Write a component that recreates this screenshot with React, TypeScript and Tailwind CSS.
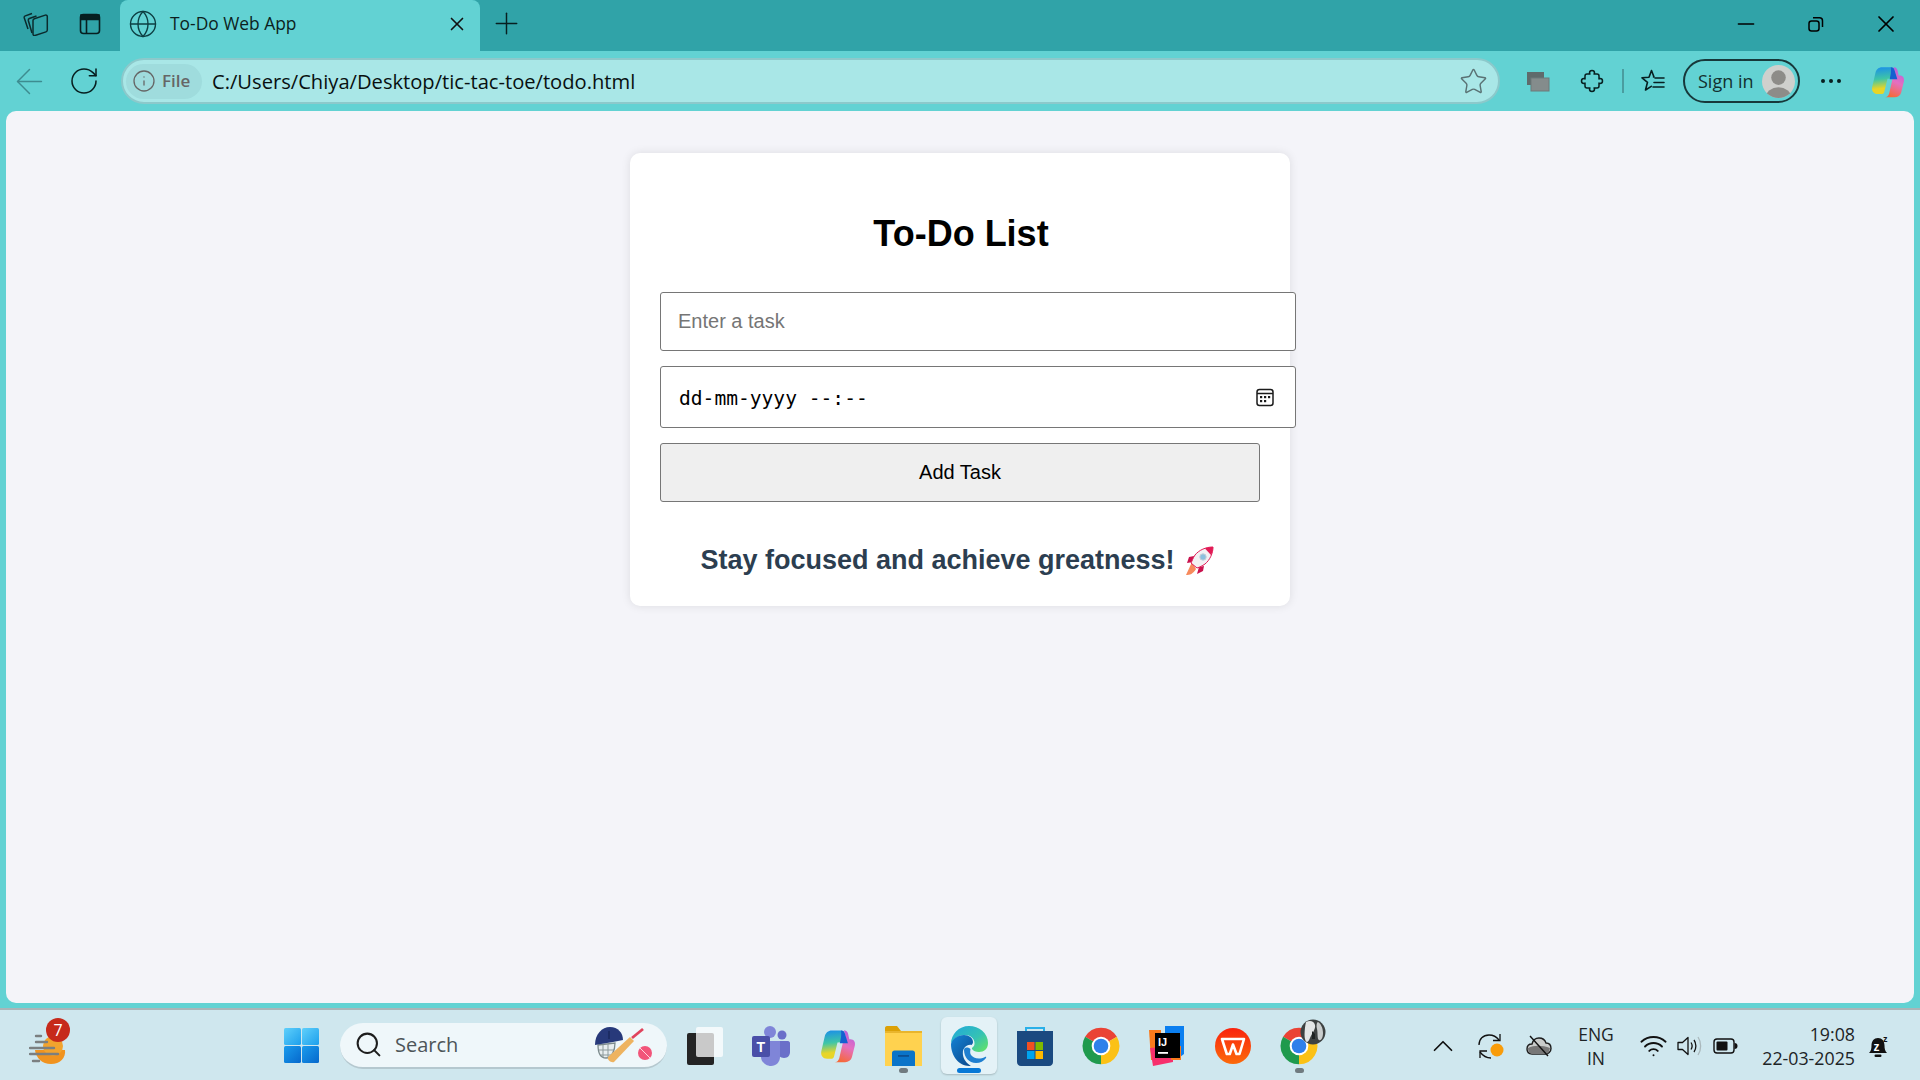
import { ArrowLeft, RotateCw, Globe, X, Plus, Minus, Info, Star, ChevronUp, Wifi, Search } from "lucide-react";

const ui = "font-['Open_Sans',sans-serif]";

function Collections() {
  return (
    <svg width="26" height="25" viewBox="0 0 26 25" fill="none" stroke="#0b2b2d" strokeWidth="1.500" strokeLinejoin="round">
      <path d="M5 18 1.300 7c-.3-1 .2-1.800 1-2.100L9 2.500" />
      <path d="M9 22 5.300 9.500c-.2-1 .2-1.700 1-2L13.500 5" />
      <path d="M10 9.500c0-.9.5-1.500 1.300-1.800l11-3.600c1.100-.3 2 .4 2 1.500v13.500c0 .9-.4 1.500-1.300 1.800l-11 3.600c-1.100.4-2-.3-2-1.400z" />
    </svg>
  );
}

function VerticalTabs() {
  return (
    <svg width="24" height="24" viewBox="0 0 24 24" fill="none" stroke="#071f20" strokeWidth="1.600">
      <rect x="2.500" y="2.500" width="19" height="19" rx="3" />
      <path d="M3 3h18v4.500H3z" fill="#071f20" />
      <path d="M8.500 7.500v14" />
    </svg>
  );
}

function Restore() {
  return (
    <svg width="18" height="18" viewBox="0 0 18 18" fill="none" stroke="#000" strokeWidth="1.500">
      <rect x="2" y="6" width="10" height="10" rx="2.500" />
      <path d="M6 2.800h6.500c1.700 0 3 1.300 3 3V12" />
    </svg>
  );
}

function Workspaces() {
  return (
    <svg width="24" height="22" viewBox="0 0 24 22">
      <rect x="1" y="2" width="17" height="13" fill="#5f6b6c" />
      <rect x="5" y="8" width="18" height="13" fill="#848c8c" stroke="#6d7a7a" />
    </svg>
  );
}

function Extensions() {
  return (
    <svg width="24" height="24" viewBox="0 0 24 24" fill="none" stroke="#071f20" strokeWidth="1.500" strokeLinejoin="round">
      <path d="M7 5h3c0 0-.5-.5-.5-1a2.500 2.500 0 0 1 5 0c0 .5-.5 1-.5 1h3a2 2 0 0 1 2 2v3c0 0 .5-.5 1-.5a2.500 2.500 0 0 1 0 5c-.5 0-1-.5-1-.5v3a2 2 0 0 1-2 2h-3c0 0 .5.5.5 1a2.500 2.500 0 0 1-5 0c0-.5.5-1 .5-1H7a2 2 0 0 1-2-2v-3c0 0-.5.5-1 .5a2.500 2.500 0 0 1 0-5c.5 0 1 .5 1 .5V7a2 2 0 0 1 2-2z" />
    </svg>
  );
}

function Favorites() {
  return (
    <svg width="26" height="26" viewBox="0 0 26 26" fill="none" stroke="#071f20" strokeWidth="1.600" strokeLinejoin="round" strokeLinecap="round">
      <path d="M11.500 2.500 14 9h-.5M11.500 2.500 9 9.300l-7 .5 5.500 4.500L5.500 22l5.800-3.700" />
      <path d="M15 10h9M14 14.500h10M13 19h11" />
    </svg>
  );
}

function Avatar({ size }: { size: number }) {
  return (
    <svg width={size} height={size} viewBox="0 0 34 34">
      <clipPath id="avatarClip"><circle cx="17" cy="17" r="17" /></clipPath>
      <g clipPath="url(#avatarClip)">
        <rect width="34" height="34" fill="#cfd0cd" />
        <circle cx="17" cy="13" r="7.500" fill="#8d8c88" />
        <ellipse cx="17" cy="33" rx="13" ry="10" fill="#8d8c88" />
      </g>
    </svg>
  );
}

function Copilot({ id, size }: { id: string; size: number }) {
  return (
    <svg width={size} height={size} viewBox="0 0 32 32">
      <defs>
        <linearGradient id={`${id}a`} x1="0.2" y1="0" x2="0.3" y2="1">
          <stop offset="0" stopColor="#1b8fe8" />
          <stop offset="0.45" stopColor="#3fc6a6" />
          <stop offset="0.8" stopColor="#e8d527" />
        </linearGradient>
        <linearGradient id={`${id}b`} x1="0.7" y1="0" x2="0.4" y2="1">
          <stop offset="0" stopColor="#b35fe0" />
          <stop offset="0.5" stopColor="#e56fc0" />
          <stop offset="1" stopColor="#f6693a" />
        </linearGradient>
      </defs>
      <path d="M11 3h8c1.500 0 2.700 1 3 2.400L24 13l-8 .5-3 12c-.3 1.200-1.300 2-2.500 2H7c-3.500 0-5.800-3-5-6.500l3-13C5.700 5 8 3 11 3z" fill={`url(#${id}a)`} />
      <path d="M22 3c1.800 0 2.800 1.200 3.200 3l1 4.500h1c3 0 4.500 2.500 3.800 5.500l-2.500 10c-.7 2.800-3 4.500-6 4.500h-9c2 0 3.500-1.500 4-3.500l3-13c.5-2.500 1.500-3 3-3l-2-8.500z" fill={`url(#${id}b)`} />
      <path d="M19 3c2 0 3 1 3.500 3L25 14h-7l1-5c.3-2 .3-4.500 0-6z" fill="#1560d0" />
    </svg>
  );
}

function Weather() {
  return (
    <svg width="38" height="34" viewBox="0 0 38 34">
      <path d="M6 20h30c1 8-5 14-14 14S7 28 6 20z" fill="#f0931f" />
      <circle cx="24" cy="16" r="10" fill="#f2a32e" />
      <g stroke="#7b7f80" strokeWidth="2.400" strokeLinecap="round">
        <path d="M7 6h5M7 12h11M1 18h24M1 24h28M4 31h6" />
      </g>
    </svg>
  );
}

function WinLogo() {
  return (
    <svg width="35" height="35" viewBox="0 0 35 35">
      <defs>
        <linearGradient id="w1" x1="0" y1="0" x2="1" y2="1"><stop offset="0" stopColor="#5fd0fb" /><stop offset="1" stopColor="#1d9fec" /></linearGradient>
        <linearGradient id="w2" x1="0" y1="0" x2="1" y2="1"><stop offset="0" stopColor="#1a9ced" /><stop offset="1" stopColor="#0668cc" /></linearGradient>
      </defs>
      <rect width="17" height="17" fill="url(#w1)" rx="1.500" />
      <rect x="18" width="17" height="17" fill="url(#w1)" rx="1.500" />
      <rect y="18" width="17" height="17" fill="url(#w2)" rx="1.500" />
      <rect x="18" y="18" width="17" height="17" fill="url(#w2)" rx="1.500" />
    </svg>
  );
}

function Cricket() {
  return (
    <svg width="58" height="37" viewBox="0 0 58 37">
      <path d="M3 19 20 17c0 7-3 15-9 15S3 26 3 19z" fill="#e8eef0" stroke="#7c8a8c" strokeWidth="1.300" />
      <path d="M4 24h15M6 29h11M8 19v12M13 18v14" stroke="#8d9a9b" strokeWidth="1" />
      <path d="M0 19C0 8 7 1 15 1s13 6 13 13L18 16z" fill="#27397a" />
      <path d="M14 5v8" stroke="#12204f" strokeWidth="1" />
      <path d="M13 31 35 11l4 4-20 21c-3 1-7-2-6-5z" fill="#eeb360" />
      <path d="M37 12 48 3" stroke="#e0435c" strokeWidth="2.800" />
      <circle cx="50" cy="27" r="7" fill="#f2557a" />
      <path d="M45 22l10 10" stroke="#ffd5de" strokeWidth="1" />
    </svg>
  );
}

function Explorerapp() {
  return (
    <svg width="37" height="40" viewBox="0 0 37 40">
      <path d="M0 2c0-1 .6-2 2-2h10l4 5H0z" fill="#dca106" />
      <path d="M0 5h37v35H0z" fill="#ffd24f" />
      <path d="M0 5h37v2H0z" fill="#e9b52c" />
      <path d="M7 27c0-1.500 1-2.500 2.500-2.500h18c1.500 0 2.500 1 2.500 2.500v13H7z" fill="#0a74c9" />
      <path d="M13 29h11v1.800H13z" fill="#0b4f92" />
    </svg>
  );
}

function Edge() {
  return (
    <svg width="37" height="40" viewBox="0 0 37 40">
      <defs>
        <linearGradient id="e1" x1="0" y1="0" x2="1" y2="0.9"><stop offset="0" stopColor="#1fa8dc" /><stop offset="0.6" stopColor="#35c2b4" /><stop offset="1" stopColor="#62e268" /></linearGradient>
        <linearGradient id="e2" x1="0" y1="0" x2="0.8" y2="1"><stop offset="0" stopColor="#1583d6" /><stop offset="1" stopColor="#0b4b90" /></linearGradient>
      </defs>
      <path d="M18 0c10 0 19 7 19 17 0 6-4 9-9 9-3 0-6-1-7-3-.4-1 .4-1.500 1-2 1-1 1.500-2 1.500-3.500C23.500 12 19 9 14 9 7 9 1 14 0 18 0 8 8 0 18 0z" fill="url(#e1)" />
      <path d="M0 18c1-5 7-9 13-9 5 0 9 3 9 7 0 1-.4 2-1.500 3C15 18 11 23 12 29c.5 4 3 8 8 10.800C9 41 0 31 0 18z" fill="url(#e2)" />
      <path d="M13 24c0 7 5 13 12 13 4 0 8-2 10-5 .5-1 0-1.500-1-1-6 3-12 1-14-2-1-2-1-3-.5-6-3-2-6-2-6.500 1z" fill="#1f7fd0" />
    </svg>
  );
}

function Store() {
  return (
    <svg width="36" height="40" viewBox="0 0 36 40">
      <path d="M9 7V2h18v5" fill="none" stroke="#29b0e8" strokeWidth="2" />
      <path d="M0 5h36v31c0 2-1.500 4-4 4H4c-2.500 0-4-2-4-4z" fill="#1a4a80" />
      <rect x="10" y="16" width="7.500" height="8" fill="#f25022" />
      <rect x="18.500" y="16" width="7.500" height="8" fill="#7fba00" />
      <rect x="10" y="25" width="7.500" height="8" fill="#00a4ef" />
      <rect x="18.500" y="25" width="7.500" height="8" fill="#ffb900" />
    </svg>
  );
}

function Chrome({ size }: { size: number }) {
  return (
    <svg width={size} height={size} viewBox="0 0 24 24">
      <path d="M12 12 2.470 6.500A11 11 0 0 1 21.530 6.500Z" fill="#ea4335" />
      <path d="M12 12 21.530 6.500A11 11 0 0 1 12 23Z" fill="#fbc116" />
      <path d="M12 12 12 23A11 11 0 0 1 2.470 6.500Z" fill="#1f9a4d" />
      <circle cx="12" cy="12" r="5.600" fill="#fff" />
      <circle cx="12" cy="12" r="4.400" fill="#2f80ea" />
    </svg>
  );
}

function Idea() {
  return (
    <svg width="36" height="40" viewBox="0 0 36 40">
      <path d="M0 4h12v30H2z" fill="#f97a1c" />
      <path d="M16 0h19v28l-8 6H16z" fill="#0b7ff0" />
      <path d="M1 22 24 20v16l-20 4z" fill="#f7306d" />
      <path d="M22 20h10v14H22z" fill="#f97a1c" />
      <rect x="6" y="7" width="25" height="25" fill="#000" />
      <rect x="9" y="26" width="10" height="1.800" fill="#fff" />
      <text x="9" y="20" fill="#fff" fontFamily="'Liberation Sans',sans-serif" fontSize="11" fontWeight="700">IJ</text>
    </svg>
  );
}

function Wps() {
  return (
    <svg width="36" height="38" viewBox="0 0 36 38">
      <defs>
        <linearGradient id="wp" x1="0" y1="0" x2="0" y2="1"><stop offset="0" stopColor="#f9230e" /><stop offset="1" stopColor="#fc6a0a" /></linearGradient>
      </defs>
      <circle cx="18" cy="19" r="18" fill="url(#wp)" />
      <path d="M7 12h22l-4.500 15h-3L18 17.500 14.800 27h-3z" fill="none" stroke="#fff" strokeWidth="2.600" strokeLinejoin="round" />
    </svg>
  );
}

function Rocket() {
  return (
    <svg width="29" height="29" viewBox="0 0 29 29" className="shrink-0">
      <path d="M7 16 1 29c4 0 7-1 10-6z" fill="#f78a5c" />
      <path d="M9 10 4 11l-2 6 6-1zM19 20l-1 5-6 3 2-7z" fill="#c9124e" />
      <path d="M28 1c-7 0-14 3-18 8-2 3-3 6-4 8l6 5c3-1 5-2 8-4 5-4 8-11 8-17z" fill="#f3f1f4" stroke="#e21a55" strokeWidth="1" />
      <path d="M28 1c-3 0-6 .5-8 1.500L26 9c1.500-2.500 2-5.500 2-8z" fill="#e21a55" />
      <circle cx="18" cy="11" r="3.200" fill="#8cc0df" stroke="#c6d0d8" />
    </svg>
  );
}

function Calendar() {
  return (
    <svg width="18" height="19" viewBox="0 0 18 19" fill="none" stroke="#1b1b1b" strokeWidth="1.500">
      <rect x="1" y="1.500" width="16" height="16" rx="2.500" />
      <path d="M1 5.500h16" />
      <g fill="#1b1b1b" stroke="none">
        <rect x="4" y="8" width="2.200" height="2.200" />
        <rect x="8" y="8" width="2.200" height="2.200" />
        <rect x="12" y="8" width="2.200" height="2.200" />
        <rect x="4" y="12" width="2.200" height="2.200" />
        <rect x="8" y="12" width="2.200" height="2.200" />
      </g>
    </svg>
  );
}

function Sync() {
  return (
    <svg width="28" height="28" viewBox="0 0 28 28">
      <g fill="none" stroke="#111" strokeWidth="1.300">
        <path d="M2 13C2 7 6 3 12 3c4 0 7 1 10 5" />
        <path d="M23 2v6.500h-7" />
        <path d="M3 20c3 4 6 6 11 6" />
        <path d="M3 26v-7h7" />
      </g>
      <circle cx="20" cy="18" r="6.500" fill="#f99c0a" />
    </svg>
  );
}

function CloudOff() {
  return (
    <svg width="26" height="22" viewBox="0 0 26 22">
      <path d="M6 19C2 19 1 16 1 14c0-3 2-5 5-5 1-4 4-6 7-6 4 0 6 2 7 5 3 0 5 2 5 5.500S22 19 20 19z" fill="#c9cccb" stroke="#1d1d1d" strokeWidth="1.400" />
      <path d="M2 13c6-3 14-3 22 0-1 4-2 6-5 6H7c-3 0-5-2-5-6z" fill="#777" />
      <path d="M4 1 22 21" stroke="#111" strokeWidth="1.400" />
    </svg>
  );
}

function Speaker() {
  return (
    <svg width="26" height="24" viewBox="0 0 26 24" fill="none" stroke="#111" strokeWidth="1.300">
      <path d="M1 8.500h4.500L11 3.500v17l-5.500-5H1z" strokeLinejoin="round" />
      <path d="M14 8.500c1.300 2 1.300 5 0 7M17 6c2.500 3.500 2.500 8.500 0 12" />
      <path d="M21 3c3.500 5 3.500 13 0 18" stroke="#aab8bc" />
    </svg>
  );
}

function Battery() {
  return (
    <svg width="25" height="18" viewBox="0 0 25 18">
      <rect x="1" y="2" width="20" height="14" rx="3" fill="none" stroke="#111" strokeWidth="1.400" />
      <rect x="3.500" y="4.500" width="11" height="9" rx="1" fill="#111" />
      <path d="M21.500 6c2 0 3 1 3 3s-1 3-3 3z" fill="#111" />
    </svg>
  );
}

function Bell() {
  return (
    <svg width="22" height="24" viewBox="0 0 22 24">
      <path d="M1 19c2-2 2.500-4 2.500-7.500C3.500 7 6 4 10 4c4 0 6.500 3 6.500 7.500 0 3.500.5 5.500 2.500 7.500z" fill="#111" />
      <rect x="6.500" y="20.500" width="7" height="2.500" rx="1.200" fill="#111" />
      <text x="5.500" y="16.500" fill="#fff" fontFamily="'Liberation Sans',sans-serif" fontSize="12" fontWeight="700">z</text>
      <text x="15" y="8" fill="#111" fontFamily="'Liberation Sans',sans-serif" fontSize="9" fontWeight="700">z</text>
    </svg>
  );
}

function Slot({ children, dot, active }: { children: React.ReactNode; dot?: "gray" | "blue"; active?: boolean }) {
  return (
    <div className={`relative w-[56px] h-[57px] mr-[10px] flex items-center justify-center rounded-md ${active ? "bg-[#e4f2f7] shadow-[0_1px_2px_rgba(0,0,0,0.2)]" : ""}`}>
      {children}
      {dot === "gray" && <span className="absolute bottom-[1px] left-[24px] w-[9px] h-[5px] rounded-full bg-[#707b80]" />}
      {dot === "blue" && <span className="absolute bottom-[1px] left-[16px] w-[24px] h-[5px] rounded-full bg-[#0778d6]" />}
    </div>
  );
}

export default function App() {
  return (
    <div className={`w-[1920px] h-[1080px] flex flex-col overflow-hidden bg-[#62d2d3] ${ui}`}>
      {/* Title bar */}
      <div className="h-[51px] shrink-0 flex items-center bg-[#30a3a8] text-[#0c1f20]">
        <div className="w-[79px] pl-[23px] pb-[4px] flex items-center"><Collections /></div>
        <div className="w-[41px] pb-[4px] flex items-center -ml-[1px] mr-[1px]"><VerticalTabs /></div>
        <div className="w-[360px] h-[51px] flex items-center bg-[#62d2d3] rounded-t-lg pl-[8px] pr-[12px] pb-[4px]">
          <Globe size={30} strokeWidth={1.1} color="#0d3f43" />
          <span className="ml-[12px] text-[17.4px] whitespace-nowrap">To-Do Web App</span>
          <X size={22} strokeWidth={1.8} className="ml-auto" color="#111" />
        </div>
        <div className="pb-[4px] ml-[9px]"><Plus size={35} strokeWidth={1} color="#071f20" /></div>
        <div className="ml-auto flex items-center pb-[4px] -mr-[1px]">
          <div className="w-[70px] flex justify-center"><Minus size={26} strokeWidth={1.5} color="#000" /></div>
          <div className="w-[70px] flex justify-center"><Restore /></div>
          <div className="w-[70px] flex justify-center"><X size={28} strokeWidth={1.5} color="#000" /></div>
        </div>
      </div>

      {/* Toolbar */}
      <div className="h-[60px] shrink-0 flex items-center">
        <ArrowLeft size={41} strokeWidth={0.85} color="#3d8c90" className="ml-[9px]" />
        <RotateCw size={32} strokeWidth={1.15} color="#071f20" className="ml-[18px]" />
        <div className="ml-[21px] w-[1379px] h-[46px] flex items-center bg-[#a9e7e7] border-2 border-[#8cc9cb] rounded-full pl-[3px]">
          <div className="w-[76px] h-[35px] flex items-center rounded-full bg-[#9fdcdd] pl-[6px] text-[#666]">
            <Info size={24} strokeWidth={1.3} color="#666" />
            <span className="ml-[6px] text-[17px] font-semibold">File</span>
          </div>
          <span className="ml-[10px] text-[20.15px] text-[#081010] whitespace-nowrap">C:/Users/Chiya/Desktop/tic-tac-toe/todo.html</span>
          <Star size={29} strokeWidth={1.2} color="#5a7274" className="ml-auto mr-[10px]" />
        </div>
        <div className="ml-[26px]"><Workspaces /></div>
        <div className="ml-[30px]"><Extensions /></div>
        <div className="ml-[18px] w-[2px] h-[24px] bg-[#4a9da0]" />
        <div className="ml-[16px]"><Favorites /></div>
        <div className="ml-[17px] w-[117px] h-[44px] flex items-center rounded-full border-2 border-[#17383a] pl-[13px] pr-[3px] justify-between">
          <span className="text-[18px] text-[#12302f] whitespace-nowrap">Sign in</span>
          <Avatar size={33} />
        </div>
        <div className="ml-[21px] flex gap-[4px]">
          <span className="w-[4px] h-[4px] rounded-full bg-[#071f20]" />
          <span className="w-[4px] h-[4px] rounded-full bg-[#071f20]" />
          <span className="w-[4px] h-[4px] rounded-full bg-[#071f20]" />
        </div>
        <div className="ml-[29px]"><Copilot id="cp1" size={35} /></div>
      </div>

      {/* Page */}
      <div className="flex-1 min-h-0 px-[6px] pb-[5px]">
        <div className="h-full bg-[#f4f4f9] rounded-[10px] pt-[42px] font-['Liberation_Sans',sans-serif]">
          <div className="ml-[624px] w-[660px] h-[453px] bg-white rounded-[10px] shadow-[0_0_10px_rgba(0,0,0,0.1)] px-[30px] pt-[60px]">
            <h1 className="h-[41px] leading-[41px] text-[36px] font-bold text-black text-center pl-[2px]">To-Do List</h1>
            <input
              placeholder="Enter a task"
              readOnly
              className="block mt-[38px] w-[636px] h-[59px] px-[17px] text-[20px] bg-white border border-[#767676] rounded-[3px] placeholder:text-[#757575] outline-none"
            />
            <div className="mt-[15px] w-[636px] h-[62px] flex items-center justify-between bg-white border border-[#767676] rounded-[3px] pl-[18px] pr-[21px]">
              <span className="pt-[3px] font-['DejaVu_Sans_Mono',monospace] text-[19.6px] text-black whitespace-pre">dd-mm-yyyy --:--</span>
              <Calendar />
            </div>
            <button className="block mt-[15px] w-[600px] h-[59px] pb-[2px] text-[20px] text-black bg-[#efefef] border border-[#767676] rounded-[3px]">Add Task</button>
            <p className="mt-[42px] h-[32px] flex items-center justify-center gap-[10px] text-[27px] font-bold text-[#2c3e50] whitespace-nowrap pr-[6px]">
              <span>Stay focused and achieve greatness!</span>
              <Rocket />
            </p>
          </div>
        </div>
      </div>

      {/* Taskbar */}
      <div className="h-[72px] shrink-0 flex items-center bg-[#cfe7ee] border-t-2 border-[#a9b5b8] pt-[1px] text-[#1a1a1a]">
        <div className="relative ml-[29px] w-[38px] h-[34px] mt-[3px]">
          <Weather />
          <span className="absolute -top-[12px] left-[17px] w-[24px] h-[24px] rounded-full bg-[#c62a1b] text-white text-[16px] flex items-center justify-center">7</span>
        </div>
        <div className="ml-[217px]"><WinLogo /></div>
        <div className="ml-[21px] w-[327px] h-[46px] flex items-center rounded-full bg-[#eff7fa] border-b-2 border-[#b5c8cf] pl-[14px] pr-[14px]">
          <Search size={29} strokeWidth={1.7} color="#1d1d1d" />
          <span className="ml-[12px] text-[20px] text-[#4d5558]">Search</span>
          <div className="ml-auto"><Cricket /></div>
        </div>
        <div className="ml-[10px] flex items-center">
          <Slot>
            <div className="relative w-[36px] h-[38px]">
              <div className="absolute left-0 bottom-0 w-[27px] h-[32px] bg-[#242424] rounded-[2px]" />
              <div className="absolute right-0 top-0 w-[27px] h-[30px] bg-[#ffffffc0] rounded-[2px]" />
            </div>
          </Slot>
          <Slot>
            <svg width="38" height="40" viewBox="0 0 38 40">
              <circle cx="30" cy="9" r="4.500" fill="#6a6fc9" />
              <circle cx="18" cy="6" r="6" fill="#7f85d8" />
              <path d="M26 15h10c1 0 2 1 2 2v9c0 3-2 6-6 6s-6-3-6-6z" fill="#6a6fc9" />
              <path d="M9 15h19v16c0 5-4 9-9 9s-10-4-10-9z" fill="#7f85d8" />
              <rect y="10" width="18" height="21" rx="2" fill="#4a4fa8" />
              <text x="4.500" y="26" fill="#fff" fontFamily="'Liberation Sans',sans-serif" fontSize="14" fontWeight="700">T</text>
            </svg>
          </Slot>
          <Slot><Copilot id="cp2" size={37} /></Slot>
          <Slot dot="gray"><Explorerapp /></Slot>
          <Slot dot="blue" active><Edge /></Slot>
          <Slot><Store /></Slot>
          <Slot><Chrome size={40} /></Slot>
          <Slot><Idea /></Slot>
          <Slot><Wps /></Slot>
          <Slot dot="gray">
            <div className="relative"><Chrome size={40} />
              <svg width="26" height="26" viewBox="0 0 26 26" className="absolute -top-[7px] -right-[7px]">
                <circle cx="13" cy="13" r="12.500" fill="#3d4141" />
                <path d="M6 3c4-2 8-1 9 3s-3 8-5 13-4 5-5 1 0-13 1-17z" fill="#e3e6e6" />
                <path d="M18 3c3 2 5 6 5 11s-2 8-4 7-1-7-2-11 0-7 1-7z" fill="#c9cdcd" />
                <path d="M12 12l3 3v5h-3z" fill="#1e2222" />
              </svg>
            </div>
          </Slot>
        </div>
        <ChevronUp size={34} strokeWidth={1.2} color="#111" className="ml-[89px]" />
        <div className="ml-[17px]"><Sync /></div>
        <div className="ml-[21px]"><CloudOff /></div>
        <div className="ml-[19px] w-[50px] text-center text-[17.5px] leading-[24px] text-[#1d2426]">ENG<br />IN</div>
        <Wifi size={29} strokeWidth={1.6} color="#111" className="ml-[18px]" />
        <div className="ml-[9px]"><Speaker /></div>
        <div className="ml-[10px]"><Battery /></div>
        <div className="ml-[23px] w-[94px] text-right text-[17.8px] leading-[24px] text-[#1d2426] whitespace-nowrap">19:08<br />22-03-2025</div>
        <div className="ml-[13px]"><Bell /></div>
      </div>
    </div>
  );
}
